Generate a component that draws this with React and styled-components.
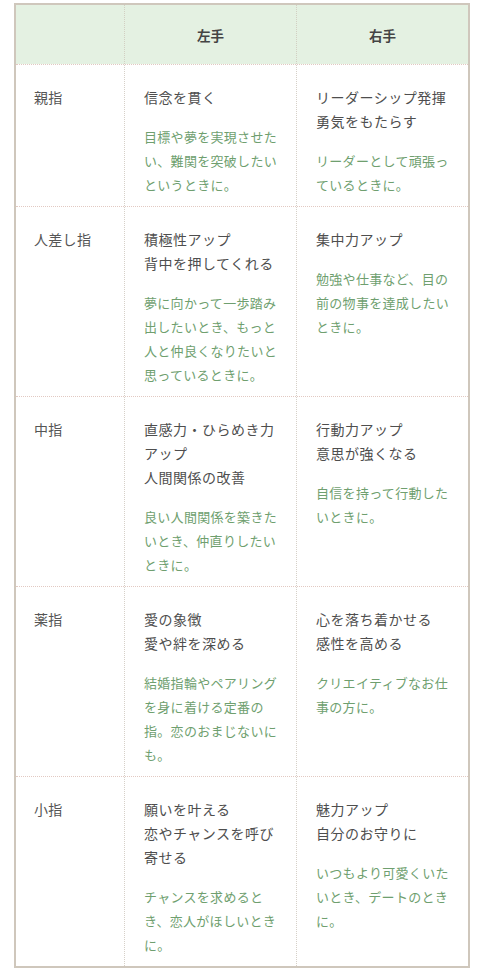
import React from 'react';
import styled, { createGlobalStyle } from 'styled-components';

const GlobalStyle = createGlobalStyle`
  html, body {
    margin: 0;
    padding: 0;
    background: #ffffff;
  }
  body {
    font-family: "Noto Sans CJK JP", "Noto Sans", sans-serif;
    color: #555;
  }
`;

const Page = styled.div`
  padding: 3px 15px 12px 14px;
`;

const Table = styled.div`
  width: 456px;
  box-sizing: border-box;
  border: 2px solid #cfc7bc;
  background: #fff;
`;

const Row = styled.div`
  display: grid;
  grid-template-columns: 108px 172px 172px;
  background: ${(props) => (props.head ? '#e4f1e2' : '#fff')};
  border-top: ${(props) => (props.first ? 'none' : '1px dotted #e2c9c2')};
`;

const HeadCell = styled.div`
  height: 59px;
  display: flex;
  align-items: center;
  justify-content: center;
  font-size: 13.5px;
  font-weight: 700;
  color: #444;
  border-left: ${(props) => (props.divider ? '1px dotted #d2cfc2' : 'none')};
`;

const Cell = styled.div`
  padding: 20px 13px 9px ${(props) => (props.label ? '18px' : '19px')};
  border-left: ${(props) => (props.divider ? '1px dotted #d6d0c8' : 'none')};
  min-width: 0;
`;

const Label = styled.div`
  font-size: 14px;
  line-height: 24px;
  letter-spacing: 0.3px;
  color: #555;
`;

const Main = styled.div`
  font-size: 14px;
  line-height: 24px;
  letter-spacing: 0.5px;
  color: #4e4e4e;
  line-break: strict;
`;

const Note = styled.div`
  margin-top: 16px;
  font-size: 13px;
  line-height: 24px;
  letter-spacing: 0.3px;
  color: #6f9f6f;
  line-break: strict;
`;

const rows = [
  {
    finger: '親指',
    left: { main: ['信念を貫く'], note: '目標や夢を実現させたい、難関を突破したいというときに。' },
    right: { main: ['リーダーシップ発揮', '勇気をもたらす'], note: 'リーダーとして頑張っているときに。' },
  },
  {
    finger: '人差し指',
    left: { main: ['積極性アップ', '背中を押してくれる'], note: '夢に向かって一歩踏み出したいとき、もっと人と仲良くなりたいと思っているときに。' },
    right: { main: ['集中力アップ'], note: '勉強や仕事など、目の前の物事を達成したいときに。' },
  },
  {
    finger: '中指',
    left: { main: ['直感力・ひらめき力アップ', '人間関係の改善'], note: '良い人間関係を築きたいとき、仲直りしたいときに。' },
    right: { main: ['行動力アップ', '意思が強くなる'], note: '自信を持って行動したいときに。' },
  },
  {
    finger: '薬指',
    left: { main: ['愛の象徴', '愛や絆を深める'], note: '結婚指輪やペアリングを身に着ける定番の指。恋のおまじないにも。' },
    right: { main: ['心を落ち着かせる', '感性を高める'], note: 'クリエイティブなお仕事の方に。' },
  },
  {
    finger: '小指',
    left: { main: ['願いを叶える', '恋やチャンスを呼び寄せる'], note: 'チャンスを求めるとき、恋人がほしいときに。' },
    right: { main: ['魅力アップ', '自分のお守りに'], note: 'いつもより可愛くいたいとき、デートのときに。' },
  },
];

const Entry = ({ data, divider }) => (
  <Cell divider={divider}>
    {data.main.map((line) => (
      <Main key={line}>{line}</Main>
    ))}
    <Note>{data.note}</Note>
  </Cell>
);

export default function App() {
  return (
    <Page>
      <GlobalStyle />
      <Table>
        <Row head first>
          <HeadCell />
          <HeadCell divider>左手</HeadCell>
          <HeadCell divider>右手</HeadCell>
        </Row>
        {rows.map((row) => (
          <Row key={row.finger}>
            <Cell label>
              <Label>{row.finger}</Label>
            </Cell>
            <Entry data={row.left} divider />
            <Entry data={row.right} divider />
          </Row>
        ))}
      </Table>
    </Page>
  );
}
